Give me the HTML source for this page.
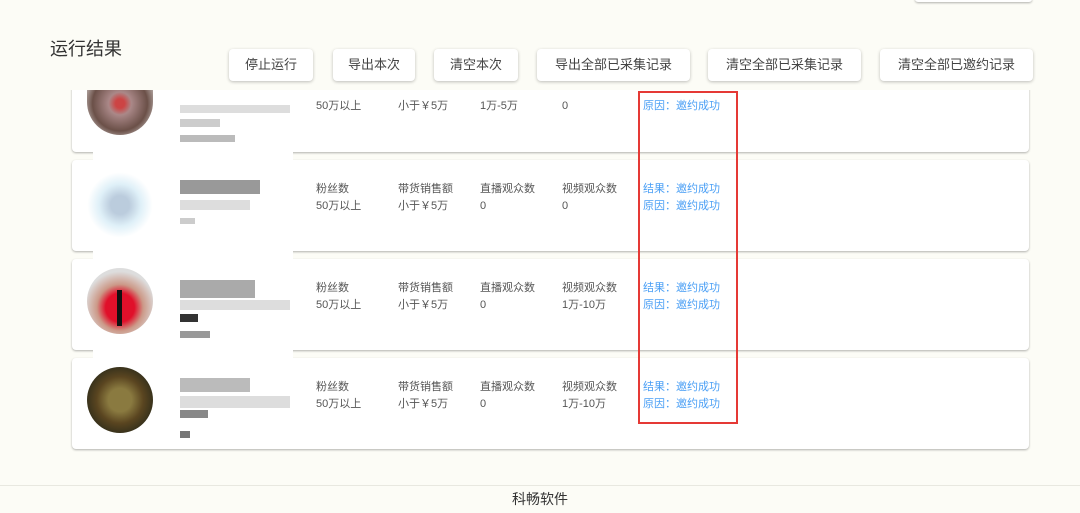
<!DOCTYPE html><html><head><meta charset="utf-8"><style>
body{margin:0;width:1080px;height:512px;background:#fcfcf6;font-family:"Liberation Sans","Noto Sans CJK SC",sans-serif;position:relative;overflow:hidden}
.a{position:absolute}
.card{position:absolute;left:72px;width:957px;background:#fff;border-radius:4px;box-shadow:0 1px 2px rgba(0,0,0,.3)}
.btn{position:absolute;top:49px;height:32px;background:#fff;border-radius:4px;box-shadow:0 1px 3px rgba(0,0,0,.25);font-size:13px;color:#444;line-height:32px;text-align:center}
.t{position:absolute;font-size:11px;color:#555;line-height:17px}
.b{color:#4a9ff5}
.av{position:absolute;left:87px;width:66px;height:66px;border-radius:50%}
.px{position:absolute;background:#ccc}
</style></head><body>
<div class="card" style="top:40px;height:112px"></div>
<div class="card" style="top:160px;height:91px"></div>
<div class="card" style="top:259px;height:91px"></div>
<div class="card" style="top:358px;height:91px"></div>
<div class="a" style="left:0;top:0;width:1080px;height:90px;background:#fcfcf6"></div>
<div class="a" style="left:915px;top:-4px;width:117px;height:6px;background:#fff;border-radius:4px;box-shadow:0 1px 2px rgba(0,0,0,.3)"></div>
<div class="a" style="left:50px;top:35px;font-size:18px;color:#333">运行结果</div>
<div class="btn" style="left:229px;width:84px">停止运行</div>
<div class="btn" style="left:333px;width:82px">导出本次</div>
<div class="btn" style="left:434px;width:84px">清空本次</div>
<div class="btn" style="left:537px;width:153px">导出全部已采集记录</div>
<div class="btn" style="left:708px;width:153px">清空全部已采集记录</div>
<div class="btn" style="left:880px;width:153px">清空全部已邀约记录</div>

<div class="a" style="left:93px;top:90px;width:200px;height:65px;background:#fff"></div>
<div class="av" style="top:90px;height:45px;border-radius:0 0 33px 33px;background:radial-gradient(circle at 50% 30%,#c44 0 10%,#a88 25%,#6b5048 60%,#eee 95%)"></div>
<div class="px" style="left:180px;top:105px;width:110px;height:8px;background:#ddd"></div>
<div class="px" style="left:180px;top:119px;width:40px;height:8px;background:#ccc"></div>
<div class="px" style="left:180px;top:135px;width:55px;height:7px;background:#bbb"></div>
<div class="t" style="left:316px;top:98px">50万以上</div>
<div class="t" style="left:398px;top:98px">小于￥5万</div>
<div class="t" style="left:480px;top:98px">1万-5万</div>
<div class="t" style="left:562px;top:98px">0</div>
<div class="t b" style="left:643px;top:98px">原因：邀约成功</div>

<div class="a" style="left:93px;top:152px;width:200px;height:8px;background:#fff"></div>
<div class="av" style="top:172px;background:radial-gradient(circle,#bcd 0 20%,#dff0f8 45%,#fff 70%)"></div>
<div class="px" style="left:180px;top:180px;width:80px;height:14px;background:#999"></div>
<div class="px" style="left:180px;top:200px;width:70px;height:10px;background:#ddd"></div>
<div class="px" style="left:180px;top:218px;width:15px;height:6px;background:#ccc"></div>
<div class="t" style="left:316px;top:181px">粉丝数<br>50万以上</div>
<div class="t" style="left:398px;top:181px">带货销售额<br>小于￥5万</div>
<div class="t" style="left:480px;top:181px">直播观众数<br>0</div>
<div class="t" style="left:562px;top:181px">视频观众数<br>0</div>
<div class="t b" style="left:643px;top:181px">结果：邀约成功<br>原因：邀约成功</div>

<div class="a" style="left:93px;top:251px;width:200px;height:8px;background:#fff"></div>
<div class="av" style="top:268px;background:radial-gradient(circle at 50% 60%,#e0102a 0 28%,#c98 45%,#ddd 70%)"></div>
<div class="a" style="left:117px;top:290px;width:5px;height:36px;background:#111"></div>
<div class="px" style="left:180px;top:280px;width:75px;height:18px;background:#aaa"></div>
<div class="px" style="left:180px;top:300px;width:110px;height:10px;background:#ddd"></div>
<div class="px" style="left:180px;top:314px;width:18px;height:8px;background:#333"></div>
<div class="px" style="left:180px;top:331px;width:30px;height:7px;background:#999"></div>
<div class="t" style="left:316px;top:280px">粉丝数<br>50万以上</div>
<div class="t" style="left:398px;top:280px">带货销售额<br>小于￥5万</div>
<div class="t" style="left:480px;top:280px">直播观众数<br>0</div>
<div class="t" style="left:562px;top:280px">视频观众数<br>1万-10万</div>
<div class="t b" style="left:643px;top:280px">结果：邀约成功<br>原因：邀约成功</div>

<div class="a" style="left:93px;top:350px;width:200px;height:8px;background:#fff"></div>
<div class="av" style="top:367px;background:radial-gradient(circle,#8a7a40 0 25%,#5a4520 50%,#2a2a1a 80%)"></div>
<div class="px" style="left:180px;top:378px;width:70px;height:14px;background:#bbb"></div>
<div class="px" style="left:180px;top:396px;width:110px;height:12px;background:#ddd"></div>
<div class="px" style="left:180px;top:410px;width:28px;height:8px;background:#888"></div>
<div class="px" style="left:180px;top:431px;width:10px;height:7px;background:#777"></div>
<div class="t" style="left:316px;top:379px">粉丝数<br>50万以上</div>
<div class="t" style="left:398px;top:379px">带货销售额<br>小于￥5万</div>
<div class="t" style="left:480px;top:379px">直播观众数<br>0</div>
<div class="t" style="left:562px;top:379px">视频观众数<br>1万-10万</div>
<div class="t b" style="left:643px;top:379px">结果：邀约成功<br>原因：邀约成功</div>

<div class="a" style="left:638px;top:91px;width:96px;height:329px;border:2px solid #e53935"></div>
<div class="a" style="left:0;top:485px;width:1080px;height:27px;background:#fcfcf6;border-top:1px solid #e8e8e0"></div>
<div class="a" style="left:0;top:489px;width:1080px;text-align:center;font-size:14px;color:#333">科畅软件</div>
</body></html>
